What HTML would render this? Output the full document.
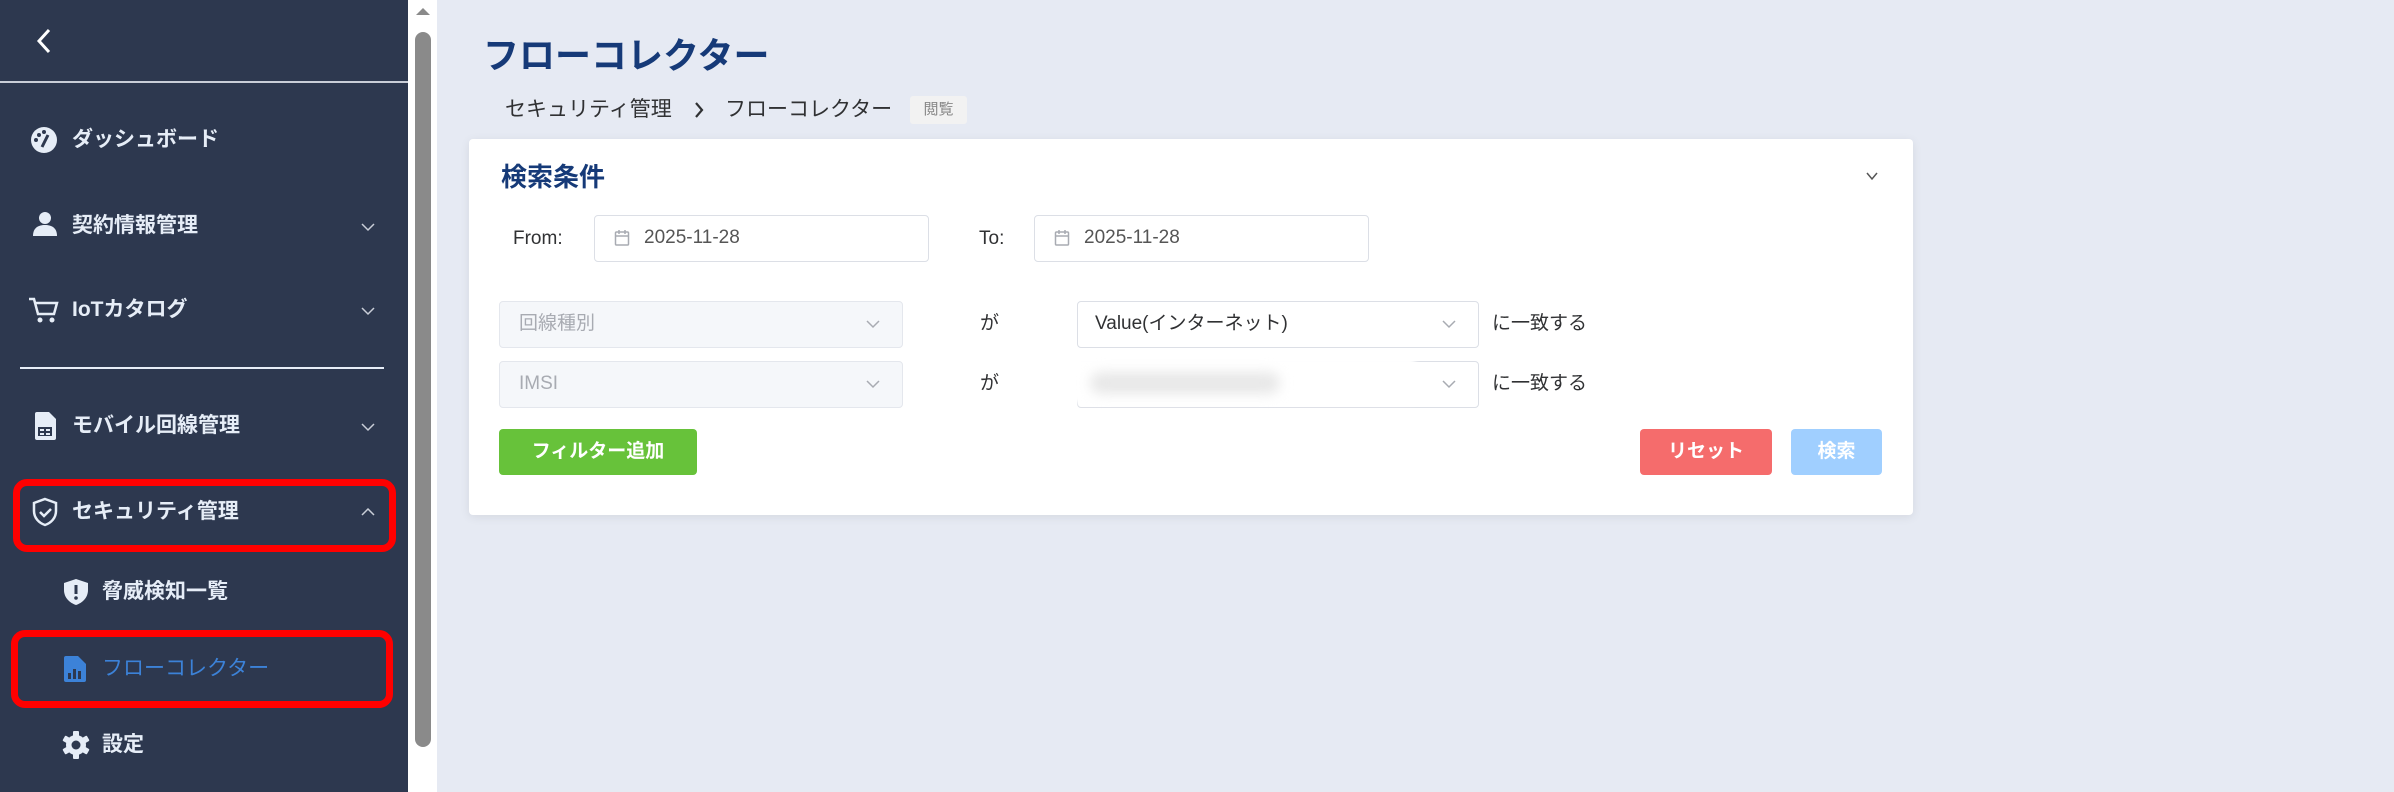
<!DOCTYPE html>
<html><head><meta charset="utf-8"><style>
*{box-sizing:border-box;margin:0;padding:0}
body{width:2394px;height:792px;overflow:hidden;background:#e6eaf3;font-family:"Liberation Sans","Noto Sans CJK JP",sans-serif;position:relative}
.a{position:absolute}
.side{left:0;top:0;width:408px;height:792px;background:#2d384f}
.sb{left:408px;top:0;width:29px;height:792px;background:#fff}
.thumb{left:415px;top:32px;width:16px;height:715px;background:#8a8a8a;border-radius:8px}
.it{color:#e6edf7;font-size:21px;font-weight:600;line-height:30px;left:72px}
.ic{left:30px}
.chev{left:360px;width:16px;height:16px}
.red{border:7px solid #f00;border-radius:14px}
.inp{background:#fff;border:1px solid #dcdfe6;border-radius:4px}
.t{font-size:19px;color:#303133;line-height:24px}
.btn{color:#fff;font-size:19px;font-weight:700;border-radius:4px;text-align:center;line-height:46px;height:46px}
</style></head><body>
<div class="a side"></div>
<svg class="a" style="left:34px;top:27px" width="20" height="28" viewBox="0 0 20 28"><path d="M15 3L5 14l10 11" stroke="#fff" stroke-width="3" fill="none"/></svg>
<div class="a" style="left:0;top:81px;width:408px;height:2px;background:#c9ced8"></div>
<svg class="a ic" style="top:126px" width="28" height="28" viewBox="0 0 28 28"><circle cx="14" cy="14" r="13" fill="#e6edf7"/><circle cx="9" cy="9" r="2" fill="#2d384f"/><circle cx="14" cy="6" r="2" fill="#2d384f"/><circle cx="6" cy="14" r="2" fill="#2d384f"/><path d="M12 21l6-12" stroke="#2d384f" stroke-width="3"/></svg>
<div class="a it" style="top:125px">ダッシュボード</div>
<svg class="a ic" style="top:211px;left:32px" width="26" height="26" viewBox="0 0 26 26"><circle cx="13" cy="7" r="6" fill="#e6edf7"/><path d="M1 25c0-8 5-11 12-11s12 3 12 11z" fill="#e6edf7"/></svg>
<div class="a it" style="top:211px">契約情報管理</div>
<svg class="a chev" style="top:219px" viewBox="0 0 16 16"><path d="M2 5l6 6 6-6" stroke="#c9ced8" stroke-width="1.5" fill="none"/></svg>
<svg class="a ic" style="top:296px;left:28px" width="32" height="28" viewBox="0 0 32 28"><path d="M1 3h5l4 15h16l3-11H8" stroke="#e6edf7" stroke-width="2.5" fill="none"/><circle cx="12" cy="24" r="2.5" fill="#e6edf7"/><circle cx="24" cy="24" r="2.5" fill="#e6edf7"/></svg>
<div class="a it" style="top:295px">IoTカタログ</div>
<svg class="a chev" style="top:303px" viewBox="0 0 16 16"><path d="M2 5l6 6 6-6" stroke="#c9ced8" stroke-width="1.5" fill="none"/></svg>
<div class="a" style="left:20px;top:367px;width:364px;height:2px;background:#e6edf7"></div>
<svg class="a ic" style="top:412px;left:34px" width="22" height="28" viewBox="0 0 22 28"><path d="M3 0h12l7 7v19a2 2 0 01-2 2H3a2 2 0 01-2-2V2a2 2 0 012-2z" fill="#e6edf7"/><rect x="4" y="15" width="14" height="9" fill="#2d384f"/><rect x="6" y="17" width="4" height="2" fill="#e6edf7"/><rect x="12" y="17" width="4" height="2" fill="#e6edf7"/><rect x="6" y="21" width="4" height="2" fill="#e6edf7"/><rect x="12" y="21" width="4" height="2" fill="#e6edf7"/></svg>
<div class="a it" style="top:411px">モバイル回線管理</div>
<svg class="a chev" style="top:419px" viewBox="0 0 16 16"><path d="M2 5l6 6 6-6" stroke="#c9ced8" stroke-width="1.5" fill="none"/></svg>
<div class="a red" style="left:13px;top:479px;width:383px;height:73px"></div>
<svg class="a ic" style="top:497px;left:31px" width="28" height="30" viewBox="0 0 28 30"><path d="M14 2l11 4v8c0 7-5 12-11 14C8 26 3 21 3 14V6z" stroke="#e6edf7" stroke-width="2.5" fill="none"/><path d="M9 15l4 4 7-7" stroke="#e6edf7" stroke-width="2.5" fill="none"/></svg>
<div class="a it" style="top:497px">セキュリティ管理</div>
<svg class="a chev" style="top:504px" viewBox="0 0 16 16"><path d="M2 11l6-6 6 6" stroke="#c9ced8" stroke-width="1.5" fill="none"/></svg>
<svg class="a" style="left:62px;top:578px" width="28" height="28" viewBox="0 0 28 28"><path d="M14 1l12 4v7c0 8-6 13-12 15C8 25 2 20 2 12V5z" fill="#e6edf7"/><rect x="12.5" y="7" width="3" height="9" fill="#2d384f"/><circle cx="14" cy="20" r="1.8" fill="#2d384f"/></svg>
<div class="a it" style="top:577px;left:102px">脅威検知一覧</div>
<div class="a red" style="left:11px;top:630px;width:382px;height:78px"></div>
<svg class="a" style="left:64px;top:656px" width="22" height="26" viewBox="0 0 22 26"><path d="M2 0h12l8 8v16a2 2 0 01-2 2H2a2 2 0 01-2-2V2a2 2 0 012-2z" fill="#3c82d8"/><rect x="4" y="17" width="3" height="6" fill="#2d384f"/><rect x="9" y="13" width="3" height="10" fill="#2d384f"/><rect x="14" y="15" width="3" height="8" fill="#2d384f"/></svg>
<div class="a it" style="top:654px;left:102px;color:#3c82d8;font-weight:400">フローコレクター</div>
<svg class="a" style="left:61px;top:730px" width="30" height="30" viewBox="0 0 30 30"><g fill="#e6edf7"><circle cx="15" cy="15" r="10"/><rect x="12" y="1" width="6" height="28" rx="1"/><rect x="12" y="1" width="6" height="28" rx="1" transform="rotate(60 15 15)"/><rect x="12" y="1" width="6" height="28" rx="1" transform="rotate(120 15 15)"/></g><circle cx="15" cy="15" r="4.5" fill="#2d384f"/></svg>
<div class="a it" style="top:730px;left:102px">設定</div>
<div class="a sb"></div>
<svg class="a" style="left:414px;top:6px" width="18" height="10" viewBox="0 0 18 10"><path d="M2 9l7-7 7 7z" fill="#8a8a8a"/></svg>
<div class="a thumb"></div>

<div class="a" style="left:483px;top:33px;font-size:36px;font-weight:700;color:#163a78;line-height:46px">フローコレクター</div>
<div class="a" style="left:505px;top:97px;font-size:21px;color:#303133;line-height:26px">セキュリティ管理</div>
<svg class="a" style="left:692px;top:100px" width="14" height="20" viewBox="0 0 14 20"><path d="M4 3l6 7-6 7" stroke="#303133" stroke-width="2.2" fill="none"/></svg>
<div class="a" style="left:725px;top:97px;font-size:21px;color:#303133;line-height:26px">フローコレクター</div>
<div class="a" style="left:910px;top:96px;width:57px;height:28px;background:#f2f2f2;border-radius:3px;font-size:15px;color:#888;text-align:center;line-height:28px">閲覧</div>

<div class="a" style="left:469px;top:139px;width:1444px;height:376px;background:#fff;border-radius:4px;box-shadow:0 2px 10px rgba(0,0,0,.08)"></div>
<div class="a" style="left:501px;top:160px;font-size:26px;font-weight:700;color:#163a78;line-height:34px">検索条件</div>
<svg class="a" style="left:1865px;top:170px" width="14" height="12" viewBox="0 0 14 12"><path d="M2 3l5 6 5-6" stroke="#555" stroke-width="1.5" fill="none"/></svg>

<div class="a t" style="left:513px;top:227px">From:</div>
<div class="a inp" style="left:594px;top:215px;width:335px;height:47px"></div>
<svg class="a" style="left:614px;top:229px" width="16" height="18" viewBox="0 0 16 18"><rect x="1.5" y="3" width="13" height="13" rx="1" stroke="#a8abb2" fill="none" stroke-width="1.5"/><path d="M1.5 7h13M5 1v4M11 1v4" stroke="#a8abb2" stroke-width="1.5"/></svg>
<div class="a t" style="left:644px;top:226px;color:#555">2025-11-28</div>
<div class="a t" style="left:979px;top:227px">To:</div>
<div class="a inp" style="left:1034px;top:215px;width:335px;height:47px"></div>
<svg class="a" style="left:1054px;top:229px" width="16" height="18" viewBox="0 0 16 18"><rect x="1.5" y="3" width="13" height="13" rx="1" stroke="#a8abb2" fill="none" stroke-width="1.5"/><path d="M1.5 7h13M5 1v4M11 1v4" stroke="#a8abb2" stroke-width="1.5"/></svg>
<div class="a t" style="left:1084px;top:226px;color:#555">2025-11-28</div>

<div class="a inp" style="left:499px;top:301px;width:404px;height:47px;background:#f5f7fa;border-color:#e4e7ed"></div>
<div class="a t" style="left:519px;top:312px;color:#a8abb2">回線種別</div>
<svg class="a" style="left:865px;top:318px" width="16" height="12" viewBox="0 0 16 12"><path d="M2 3l6 6 6-6" stroke="#a8abb2" stroke-width="1.5" fill="none"/></svg>
<div class="a t" style="left:980px;top:312px">が</div>
<div class="a inp" style="left:1077px;top:301px;width:402px;height:47px"></div>
<div class="a t" style="left:1095px;top:312px">Value(インターネット)</div>
<svg class="a" style="left:1441px;top:318px" width="16" height="12" viewBox="0 0 16 12"><path d="M2 3l6 6 6-6" stroke="#a8abb2" stroke-width="1.5" fill="none"/></svg>
<div class="a t" style="left:1492px;top:312px">に一致する</div>

<div class="a inp" style="left:499px;top:361px;width:404px;height:47px;background:#f5f7fa;border-color:#e4e7ed"></div>
<div class="a t" style="left:519px;top:372px;color:#a8abb2">IMSI</div>
<svg class="a" style="left:865px;top:378px" width="16" height="12" viewBox="0 0 16 12"><path d="M2 3l6 6 6-6" stroke="#a8abb2" stroke-width="1.5" fill="none"/></svg>
<div class="a t" style="left:980px;top:372px">が</div>
<div class="a inp" style="left:1077px;top:361px;width:402px;height:47px"></div>
<div class="a" style="left:1055px;top:356px;width:360px;height:47px;background:#fff;filter:blur(3px)"></div>
<div class="a" style="left:1090px;top:372px;width:190px;height:22px;background:#e8e8e8;border-radius:11px;filter:blur(6px)"></div>
<svg class="a" style="left:1441px;top:378px" width="16" height="12" viewBox="0 0 16 12"><path d="M2 3l6 6 6-6" stroke="#a8abb2" stroke-width="1.5" fill="none"/></svg>
<div class="a t" style="left:1492px;top:372px">に一致する</div>

<div class="a btn" style="left:499px;top:429px;width:198px;background:#67c23a">フィルター追加</div>
<div class="a btn" style="left:1640px;top:429px;width:132px;background:#f56c6c">リセット</div>
<div class="a btn" style="left:1791px;top:429px;width:91px;background:#a0cfff">検索</div>
</body></html>
